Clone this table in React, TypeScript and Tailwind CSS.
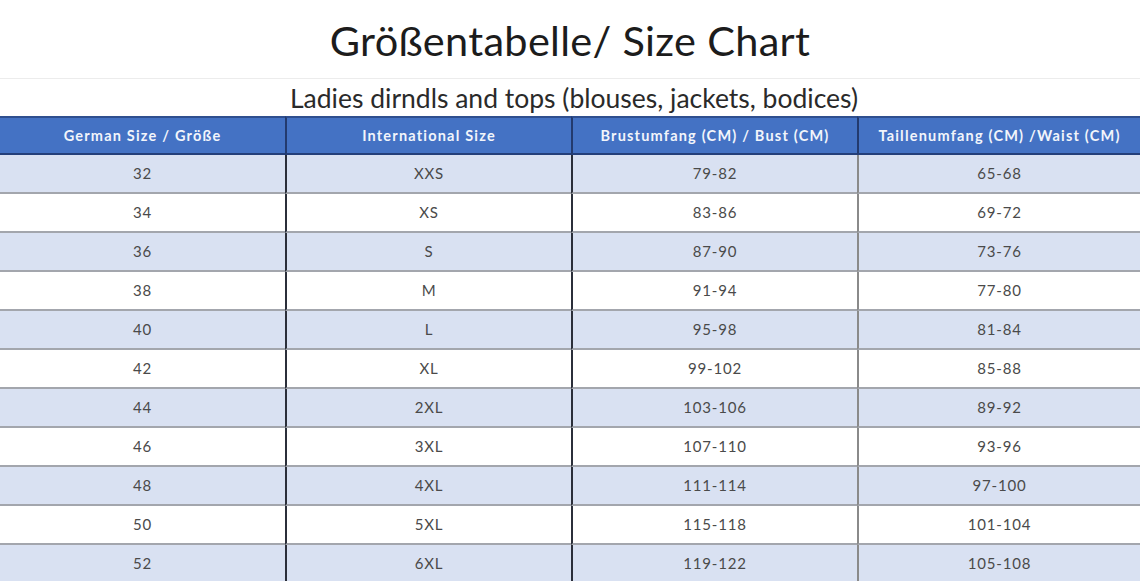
const rows = [
  ['32', 'XXS', '79-82', '65-68'],
  ['34', 'XS', '83-86', '69-72'],
  ['36', 'S', '87-90', '73-76'],
  ['38', 'M', '91-94', '77-80'],
  ['40', 'L', '95-98', '81-84'],
  ['42', 'XL', '99-102', '85-88'],
  ['44', '2XL', '103-106', '89-92'],
  ['46', '3XL', '107-110', '93-96'],
  ['48', '4XL', '111-114', '97-100'],
  ['50', '5XL', '115-118', '101-104'],
  ['52', '6XL', '119-122', '105-108'],
]

const headers = [
  'German Size / Größe',
  'International Size',
  'Brustumfang (CM) / Bust (CM)',
  'Taillenumfang (CM) /Waist (CM)',
]

// column borders: first two dark, last one grey
const colBorder = ['', 'border-l-2 border-[#2b2f3a]', 'border-l-2 border-[#2b2f3a]', 'border-l-2 border-[#8a8a8a]']

export default function App() {
  return (
    <div className="w-[1140px] h-[581px] overflow-hidden bg-white font-['Lato',sans-serif] text-[#222]">
      <div className="h-[79px] flex items-center justify-center border-b border-[#ececec]">
        <h1 className="text-[41.5px] leading-none tracking-[0.3px] text-[#1c1c1c] pt-[4px]">Größentabelle/ Size Chart</h1>
      </div>
      <div className="h-[37px] flex items-center justify-center">
        <h2 className="text-[26.5px] leading-none text-[#2a2a2a] pl-[8px] pt-[2px]">Ladies dirndls and tops (blouses, jackets, bodices)</h2>
      </div>

      <div className="grid grid-cols-[285px_286px_286px_283px]">
        {headers.map((h, i) => (
          <div
            key={h}
            className={`h-[39px] flex items-center justify-center bg-[#4472c4] border-t-2 border-b-2 border-t-[#2f4f8f] border-b-[#243f7a] text-[#f2f5fb] font-bold text-[14.5px] tracking-[1.2px] ${i > 0 ? 'border-l-2 border-l-[#233a6e]' : ''}`}
          >
            {h}
          </div>
        ))}

        {rows.map((r, ri) =>
          r.map((c, ci) => (
            <div
              key={`${ri}-${ci}`}
              className={`h-[39px] flex items-center justify-center text-[15px] tracking-[0.8px] text-[#4a4a4a] border-b-2 border-b-[#a3a6ad] ${ri % 2 === 0 ? 'bg-[#d9e1f2]' : 'bg-white'} ${colBorder[ci]}`}
            >
              {c}
            </div>
          ))
        )}
      </div>
    </div>
  )
}
